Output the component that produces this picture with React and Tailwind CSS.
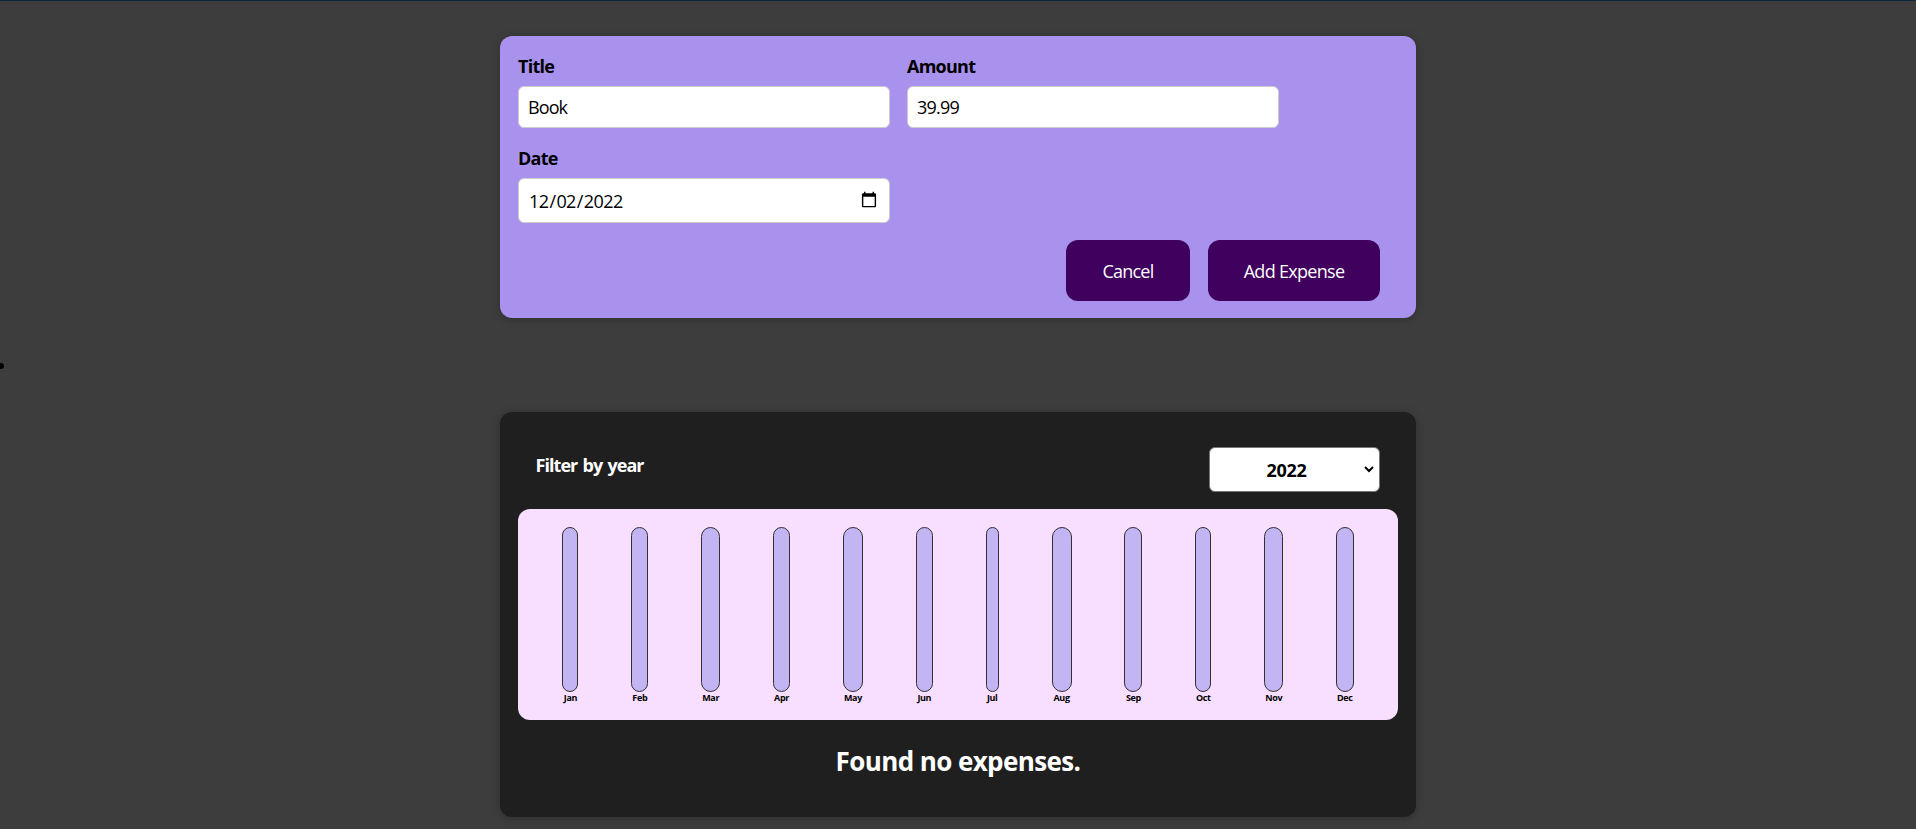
import React from 'react';

const months = [
  { label: 'Jan', width: 'w-[16px]' },
  { label: 'Feb', width: 'w-[17px]' },
  { label: 'Mar', width: 'w-[19px]' },
  { label: 'Apr', width: 'w-[17px]' },
  { label: 'May', width: 'w-[20px]' },
  { label: 'Jun', width: 'w-[17px]' },
  { label: 'Jul', width: 'w-[13px]' },
  { label: 'Aug', width: 'w-[20px]' },
  { label: 'Sep', width: 'w-[18px]' },
  { label: 'Oct', width: 'w-[16px]' },
  { label: 'Nov', width: 'w-[19px]' },
  { label: 'Dec', width: 'w-[17.5px]' },
];

function Field({ label, inputClass, ...props }) {
  return (
    <label className="flex w-[372px] flex-col gap-[9px]">
      <span className="h-[23px] text-[18px] leading-[25px] font-bold tracking-[-0.75px] whitespace-nowrap">{label}</span>
      <input
        {...props}
        className={`w-full rounded-[6px] border border-[#ccc] bg-white px-[9px] text-[18px] text-black outline-none ${inputClass}`}
      />
    </label>
  );
}

function ExpenseForm() {
  return (
    <form className="h-[282px] w-[916px] rounded-[12px] bg-[#a892ee] p-[18px] shadow-[0_1px_8px_rgba(0,0,0,0.25)]">
      <div className="flex flex-wrap gap-x-[17px] gap-y-[18px]">
        <Field label="Title" type="text" defaultValue="Book" inputClass="h-[42px] tracking-[-0.9px]" />
        <Field label="Amount" type="text" defaultValue="39.99" inputClass="h-[42px] tracking-[-0.8px]" />
        <Field
          label="Date"
          type="date"
          defaultValue="2022-12-02"
          inputClass="h-[45px] pt-[2px] tracking-[-0.6px] [&::-webkit-calendar-picker-indicator]:mb-[4px]"
        />
      </div>
      <div className="mt-[17px] mr-[18px] flex justify-end gap-[18px] text-[18px] text-white">
        <button type="button" className="h-[61px] w-[124px] rounded-[12px] bg-[#40005d] pt-[2px] tracking-[-0.8px]">Cancel</button>
        <button type="button" className="h-[61px] w-[172px] rounded-[12px] bg-[#40005d] pt-[2px] tracking-[-0.7px]">Add Expense</button>
      </div>
    </form>
  );
}

function Chart() {
  return (
    <div className="flex h-[211px] justify-around rounded-[12px] bg-[#f8dfff] p-[18px]">
      {months.map((m) => (
        <div key={m.label} className={`flex flex-col items-center ${m.width}`}>
          <div className="h-[165px] w-full shrink-0 rounded-[12px] border border-[#313131] bg-[#c3b4f3]" />
          <span className="text-[9px] leading-[12px] font-bold tracking-[-0.35px] text-black">{m.label}</span>
        </div>
      ))}
    </div>
  );
}

export default function App() {
  return (
    <div className="flex h-[829px] flex-col items-center overflow-hidden border-t border-[#0b2836] bg-[#3d3d3d] pt-[35px] font-['Open_Sans','Noto_Sans',sans-serif]">
      <ExpenseForm />
      <div className="flex h-[94px] w-full pt-[45px]">
        <span className="-ml-[2px] h-[6px] w-[6px] rounded-full bg-black" />
      </div>
      <section className="h-[405px] w-[916px] shrink-0 rounded-[12px] bg-[#1f1f1f] p-[18px] text-white shadow-[0_1px_8px_rgba(0,0,0,0.25)]">
        <div className="flex h-[79px] justify-between px-[18px] pt-[17px]">
          <span className="-ml-[0.5px] pt-[6px] text-[18px] leading-[25px] font-bold tracking-[-0.95px] [word-spacing:1.5px]">Filter by year</span>
          <div className="relative h-[45px] w-[171px]">
            <select
              defaultValue="2022"
              className="h-full w-full appearance-none rounded-[6px] border border-[#767676] bg-white pt-[2px] pr-[16px] text-center text-[18px] font-bold tracking-[-0.3px] text-black outline-none"
            >
              <option>2022</option>
            </select>
            <svg className="absolute top-[19px] right-[6px]" width="10" height="7" viewBox="0 0 10 7" fill="none" stroke="#000" strokeWidth="2">
              <path d="M1 1 L5 5 L9 1" />
            </svg>
          </div>
        </div>
        <Chart />
        <h2 className="mt-[23px] text-center text-[26px] leading-[37px] font-bold tracking-[-0.6px]">Found no expenses.</h2>
      </section>
    </div>
  );
}
